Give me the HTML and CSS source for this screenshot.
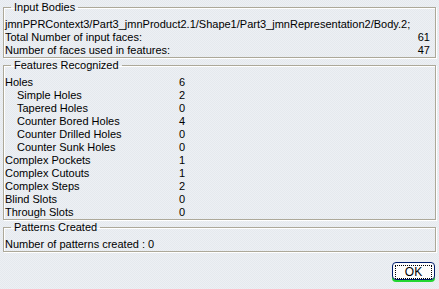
FILE: index.html
```html
<!DOCTYPE html>
<html lang="en">
<head>
    <meta charset="UTF-8">
    <title>Feature Recognition Results</title>
    <link rel="stylesheet" href="styles.css">
</head>
<body>
    <fieldset class="group">
        <legend>Input Bodies</legend>
        <div class="row">jmnPPRContext3/Part3_jmnProduct2.1/Shape1/Part3_jmnRepresentation2/Body.2;</div>
        <div class="row spread"><span>Total Number of input faces:</span><span>61</span></div>
        <div class="row spread"><span>Number of faces used in features:</span><span>47</span></div>
    </fieldset>

    <fieldset class="group">
        <legend>Features Recognized</legend>
        <div class="row feat"><span class="name">Holes</span><span>6</span></div>
        <div class="row feat sub"><span class="name">Simple Holes</span><span>2</span></div>
        <div class="row feat sub"><span class="name">Tapered Holes</span><span>0</span></div>
        <div class="row feat sub"><span class="name">Counter Bored Holes</span><span>4</span></div>
        <div class="row feat sub"><span class="name">Counter Drilled Holes</span><span>0</span></div>
        <div class="row feat sub"><span class="name">Counter Sunk Holes</span><span>0</span></div>
        <div class="row feat"><span class="name">Complex Pockets</span><span>1</span></div>
        <div class="row feat"><span class="name">Complex Cutouts</span><span>1</span></div>
        <div class="row feat"><span class="name">Complex Steps</span><span>2</span></div>
        <div class="row feat"><span class="name">Blind Slots</span><span>0</span></div>
        <div class="row feat"><span class="name">Through Slots</span><span>0</span></div>
    </fieldset>

    <fieldset class="group patterns">
        <legend>Patterns Created</legend>
        <div class="row">Number of patterns created : 0</div>
    </fieldset>

    <div class="actions">
        <button class="ok"><span class="focus">OK</span></button>
    </div>
</body>
</html>
```

FILE: styles.css
```css
body {
    margin: 0;
    padding: 1px 3px 0 3px;
    font-family: "Liberation Sans", Arial, sans-serif;
    font-size: 11px;
    color: #000;
    background: repeating-conic-gradient(#edf0f4 0 25%, #e5e9ee 0 50%) 0 0 / 2px 2px;
    height: 289px;
    box-sizing: border-box;
}
.group {
    min-width: 0;
    margin: 0;
    padding: 4px 5px 0 1px;
    border: 1px solid #aca899;
    box-shadow: 1px 1px 0 #fff, inset 1px 1px 0 #fff;
}
.group + .group {
    margin-top: 1px;
}
.group legend {
    margin-left: 6px;
    padding: 0 3px;
    line-height: 13px;
}
.row {
    line-height: 13px;
    white-space: nowrap;
}
.spread {
    display: flex;
    justify-content: space-between;
}
.feat {
    display: flex;
}
.feat .name {
    width: 174px;
}
.sub .name {
    padding-left: 12px;
    width: 162px;
}
.actions {
    display: flex;
    justify-content: flex-end;
    padding: 10px 1px 0 0;
}
.ok {
    width: 43px;
    height: 18px;
    padding: 2px;
    border: 1px solid #001c6b;
    border-radius: 4px;
    background: #fdfdfd;
    font-family: "Liberation Sans", Arial, sans-serif;
    font-size: 12px;
    box-shadow: 0 2px 0 0 #22d631;
}
.ok .focus {
    display: block;
    height: 12px;
    line-height: 12px;
    border: 1px dotted #000;
}
```
